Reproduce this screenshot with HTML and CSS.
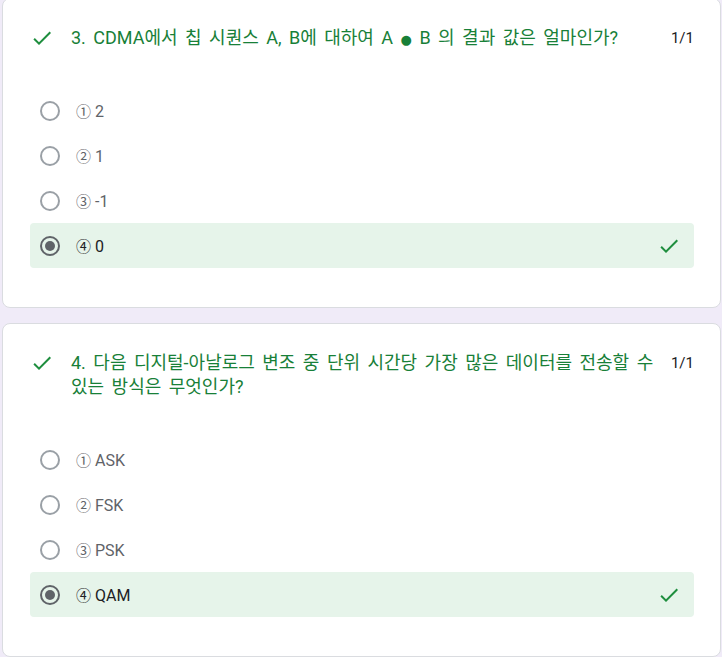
FILE: index.html
```html
<!DOCTYPE html>
<html lang="ko">
<head>
<meta charset="utf-8">
<link rel="stylesheet" href="styles.css">
</head>
<body>
<div class="page">
  <section class="card card-first">
    <div class="q-head">
      <svg class="q-check" viewBox="0 0 24 24" width="24" height="24"><path d="M9 16.17L4.83 12l-1.42 1.41L9 19 21 7l-1.41-1.41z"/></svg>
      <div class="q-title">3. CDMA에서 칩 시퀀스 A, B에 대하여 A <span class="dot">●</span> B 의 결과 값은 얼마인가?</div>
      <div class="q-points">1/1</div>
    </div>
    <div class="options">
      <div class="opt"><span class="radio"></span><span class="opt-text"><span class="num">①</span> 2</span></div>
      <div class="opt"><span class="radio"></span><span class="opt-text"><span class="num">②</span> 1</span></div>
      <div class="opt"><span class="radio"></span><span class="opt-text"><span class="num">③</span> -1</span></div>
      <div class="opt opt-correct"><span class="radio radio-on"></span><span class="opt-text"><span class="num">④</span> 0</span>
        <svg class="opt-check" viewBox="0 0 24 24" width="24" height="24"><path d="M9 16.17L4.83 12l-1.42 1.41L9 19 21 7l-1.41-1.41z"/></svg>
      </div>
    </div>
  </section>
  <section class="card">
    <div class="q-head">
      <svg class="q-check" viewBox="0 0 24 24" width="24" height="24"><path d="M9 16.17L4.83 12l-1.42 1.41L9 19 21 7l-1.41-1.41z"/></svg>
      <div class="q-title">4. 다음 디지털-아날로그 변조 중 단위 시간당 가장 많은 데이터를 전송할 수 있는 방식은 무엇인가?</div>
      <div class="q-points">1/1</div>
    </div>
    <div class="options">
      <div class="opt"><span class="radio"></span><span class="opt-text"><span class="num">①</span> ASK</span></div>
      <div class="opt"><span class="radio"></span><span class="opt-text"><span class="num">②</span> FSK</span></div>
      <div class="opt"><span class="radio"></span><span class="opt-text"><span class="num">③</span> PSK</span></div>
      <div class="opt opt-correct"><span class="radio radio-on"></span><span class="opt-text"><span class="num">④</span> QAM</span>
        <svg class="opt-check" viewBox="0 0 24 24" width="24" height="24"><path d="M9 16.17L4.83 12l-1.42 1.41L9 19 21 7l-1.41-1.41z"/></svg>
      </div>
    </div>
  </section>
</div>
</body>
</html>
```

FILE: styles.css
```css
html, body {
  margin: 0;
  padding: 0;
  background: #f0ebf8;
}
body {
  font-family: Roboto, "Noto Sans CJK KR", sans-serif;
  color: #202124;
}
.page {
  display: flex;
  flex-direction: column;
  gap: 15px;
  padding: 0 1px 0 2px;
}
.card {
  background: #fff;
  border: 1px solid #dadce0;
  border-radius: 8px;
  padding: 27px 26px 39px 27px;
}
.card-first {
  margin-top: -2px;
}
.q-head {
  display: flex;
  align-items: flex-start;
}
.q-check {
  flex: none;
  fill: #1e8e3e;
  margin-right: 17px;
}
.q-title {
  flex: 1;
  font-size: 18px;
  line-height: 24px;
  color: #188038;
  word-break: keep-all;
  word-spacing: 3px;
}
.dot {
  font-family: "DejaVu Sans", sans-serif;
  font-size: 13px;
  line-height: 0;
}
.q-points {
  flex: none;
  font-size: 15px;
  line-height: 24px;
  color: #202124;
  margin-left: 2px;
}
.options {
  margin-top: 38px;
  display: flex;
  flex-direction: column;
}
.opt {
  height: 45px;
  display: flex;
  align-items: center;
  padding: 0 13px 0 10px;
  border-radius: 4px;
}
.opt-correct {
  background: #e6f4ea;
}
.radio {
  flex: none;
  width: 16px;
  height: 16px;
  border: 2px solid #9aa0a6;
  border-radius: 50%;
  margin-right: 16px;
  display: flex;
  align-items: center;
  justify-content: center;
}
.radio-on {
  border-color: #5f6368;
}
.radio-on::after {
  content: "";
  width: 10px;
  height: 10px;
  border-radius: 50%;
  background: #5f6368;
}
.opt-text {
  flex: 1;
  font-size: 16px;
  line-height: 20px;
  padding-top: 2px;
  color: #5f6368;
}
.opt-correct .opt-text {
  color: #202124;
}
.num {
  font-family: "Noto Sans CJK KR", sans-serif;
  font-size: 15px;
  line-height: 0;
}
.opt-check {
  flex: none;
  fill: #1e8e3e;
}
```
